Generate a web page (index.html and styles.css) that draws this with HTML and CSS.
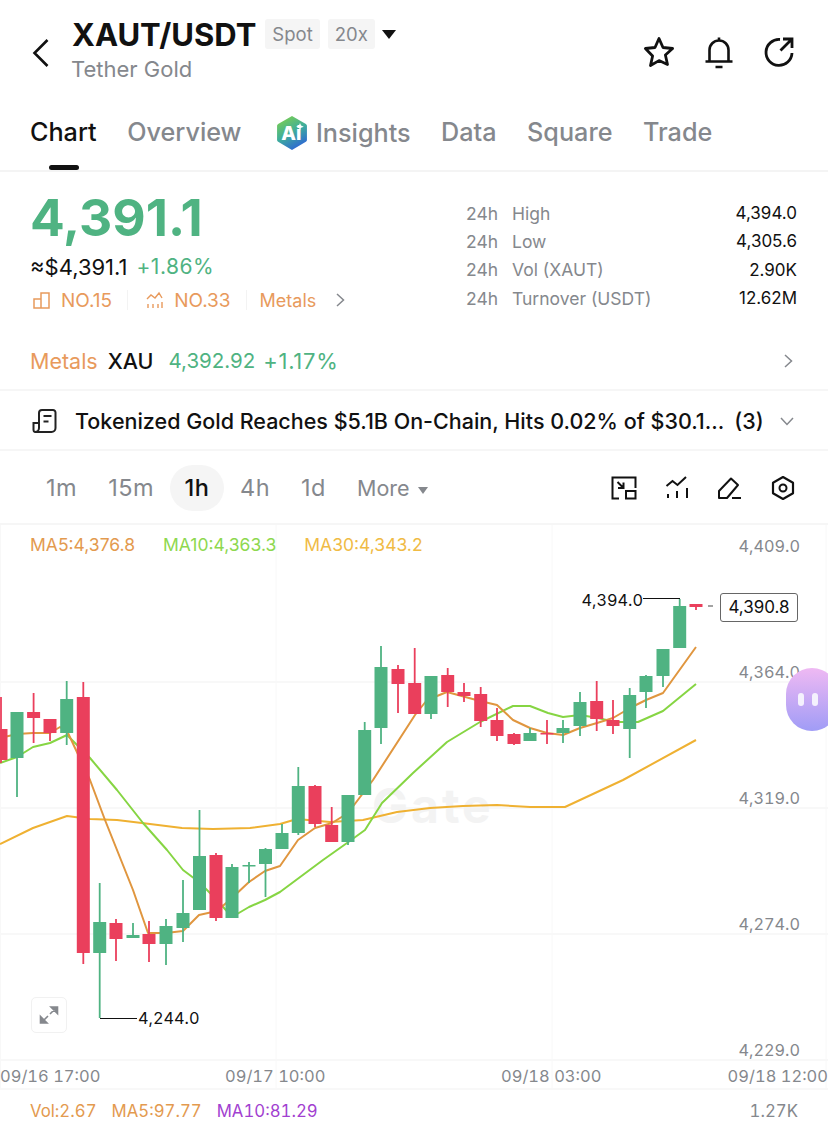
FILE: index.html
```html
<!doctype html>
<html lang="en">
    <head>
        <meta charset="UTF-8" />
        <meta name="viewport" content="width=device-width, initial-scale=1.0" />
        <title>XAUT/USDT</title>
        <link rel="stylesheet" href="styles.css">
    </head>
    <body>
        <header class="top-bar">
            <svg class="back" width="18" height="30" viewBox="0 0 18 30"><path d="M15.5 2 2.5 15l13 13" fill="none" stroke="#111" stroke-width="2.6"/></svg>
            <div class="pair">
                <div class="pair-line">
                    <h1>XAUT/USDT</h1>
                    <span class="badge">Spot</span>
                    <span class="badge badge-small">20x</span>
                    <span class="caret"></span>
                </div>
                <div class="pair-name">Tether Gold</div>
            </div>
            <div class="top-icons">
                <svg width="34" height="34" viewBox="0 0 34 34"><path d="M17 3.5l4 9 9.6 1-7.2 6.5 2.1 9.5L17 25.6 8.500 30.500l2.100-9.500L3.400 13.500l9.600-1z" fill="none" stroke="#111" stroke-width="2.800" stroke-linejoin="round"/></svg>
                <svg width="34" height="34" viewBox="0 0 34 34"><path d="M7.500 26V15a9.500 9.500 0 0 1 19 0v11M3.500 26.500h27M13.500 32h7M17 5V2.500" fill="none" stroke="#111" stroke-width="2.600"/></svg>
                <svg width="34" height="34" viewBox="0 0 34 34"><path d="M18 4.500A13 13 0 1 0 30 18M18.500 15.500 29 5M21 4h9v9" fill="none" stroke="#111" stroke-width="2.800"/></svg>
            </div>
        </header>

        <nav class="tabs">
            <a class="tab active">Chart</a>
            <a class="tab">Overview</a>
            <a class="tab tab-ai">
                <svg width="32" height="36" viewBox="1 1 30 34" preserveAspectRatio="none">
                    <defs><linearGradient id="aiGrad" x1="0.2" y1="0" x2="0.7" y2="1"><stop offset="0" stop-color="#7ccf4e"/><stop offset="0.5" stop-color="#3fae9c"/><stop offset="1" stop-color="#2c62d8"/></linearGradient></defs>
                    <path d="M16 2 29 9.500a2 2 0 0 1 1 2v13a2 2 0 0 1-1 1.800L16 34 3 26.300a2 2 0 0 1-1-1.800v-13a2 2 0 0 1 1-2z" fill="url(#aiGrad)"/>
                    <text x="6" y="25" class="ai-mark">Ai</text>
                    <path d="M23.500 8.500l1 2.500 2.500 1-2.500 1-1 2.500-1-2.500-2.500-1 2.500-1z" fill="white"/>
                </svg>
                Insights
            </a>
            <a class="tab">Data</a>
            <a class="tab">Square</a>
            <a class="tab">Trade</a>
        </nav>

        <section class="summary">
            <div class="summary-left">
                <div class="last-price">4,391.1</div>
                <div class="fiat-line"><span>≈$4,391.1</span><span class="green pct">+1.86%</span></div>
                <div class="rank-line">
                    <svg width="18" height="18" viewBox="0 0 18 18"><path d="M1 8h7v9H1zM8 2h8v15H8z" fill="none" stroke="#e89a5c" stroke-width="1.500"/></svg>
                    <span class="rank-text">NO.15</span>
                    <i class="rank-sep"></i>
                    <svg width="18" height="18" viewBox="0 0 18 18"><path d="M1 8l4-4 4 3 4-5 3 5M2 17v-4M7 17v-4M12 17v-4M16 17v-6" fill="none" stroke="#e89a5c" stroke-width="1.400"/></svg>
                    <span class="rank-text">NO.33</span>
                    <i class="rank-sep rank-sep-last"></i>
                    <span class="rank-tag">Metals</span>
                    <svg class="rank-more" width="11" height="16" viewBox="0 0 11 16"><path d="M2 2l6.500 6L2 14" fill="none" stroke="#85888d" stroke-width="1.500"/></svg>
                </div>
            </div>
            <dl class="stats">
                <div class="stat"><dt>24h</dt><dd>High</dd><b>4,394.0</b></div>
                <div class="stat"><dt>24h</dt><dd>Low</dd><b>4,305.6</b></div>
                <div class="stat"><dt>24h</dt><dd>Vol (XAUT)</dd><b>2.90K</b></div>
                <div class="stat"><dt>24h</dt><dd>Turnover (USDT)</dd><b>12.62M</b></div>
            </dl>
        </section>

        <div class="index-row">
            <span class="orange">Metals</span>
            <span class="index-name">XAU</span>
            <span class="green index-price">4,392.92</span>
            <span class="green pct-wide">+1.17%</span>
            <svg class="row-arrow" width="11" height="16" viewBox="0 0 11 16"><path d="M2 2l6.500 6L2 14" fill="none" stroke="#85888d" stroke-width="1.500"/></svg>
        </div>

        <div class="news-row">
            <svg width="26" height="26" viewBox="0 0 26 26"><path d="M7 20V5a3 3 0 0 1 3-3h11a2.500 2.500 0 0 1 2.500 2.500V20a4 4 0 0 1-4 4H4.500M7 20a4 4 0 0 1-4 4 2 2 0 0 1-1.500-2v-7H7M11.500 8h8M11.500 13.500h5" fill="none" stroke="#222" stroke-width="2"/></svg>
            <span class="news-text">Tokenized Gold Reaches $5.1B On-Chain, Hits 0.02% of $30.1...</span>
            <span class="news-count">(3)</span>
            <svg class="row-arrow" width="16" height="11" viewBox="0 0 16 11"><path d="M2 2l6 6.500L14 2" fill="none" stroke="#85888d" stroke-width="1.500"/></svg>
        </div>

        <div class="interval-row">
            <span class="interval">1m</span>
            <span class="interval">15m</span>
            <span class="interval selected">1h</span>
            <span class="interval">4h</span>
            <span class="interval">1d</span>
            <span class="interval more">More <i class="more-caret"></i></span>
            <div class="tools">
                <svg width="26" height="24" viewBox="0 0 26 24"><path d="M8 22.500H1.500v-21h23V12M6.500 6l6 6M12.500 6.500V12H7M15 15h9.500v7.500H15z" fill="none" stroke="#111" stroke-width="2"/></svg>
                <svg width="24" height="24" viewBox="0 0 24 24"><path d="M1.500 10l6-5 5 4 8.500-8M3 22v-4M12 22v-7M22 22V12" fill="none" stroke="#111" stroke-width="2"/></svg>
                <svg width="26" height="24" viewBox="0 0 26 24"><path d="M2 15 14 2.500l7 6.500L10 22H2zM15 22h9" fill="none" stroke="#111" stroke-width="2" stroke-linejoin="round"/></svg>
                <svg width="24" height="26" viewBox="0 0 24 26"><path d="M12 2l10 5.700v10.600L12 24 2 18.300V7.700z" fill="none" stroke="#111" stroke-width="2.200" stroke-linejoin="round"/><circle cx="12" cy="13" r="3.500" fill="none" stroke="#111" stroke-width="2"/></svg>
            </div>
        </div>

        <div class="chart">
            <svg id="chartSvg" width="828" height="565" viewBox="0 525 828 565"></svg>
            <div class="legend">
                <span class="ma5">MA5:4,376.8</span>
                <span class="ma10">MA10:4,363.3</span>
                <span class="ma30">MA30:4,343.2</span>
            </div>
            <div class="price-tag">4,390.8</div>
            <button class="expand">
                <svg width="20" height="20" viewBox="0 0 20 20"><path d="M11 9l6-6M12 2h6.500v6.500L12 2zM9 11l-6 6M8 18H1.500v-6.500L8 18z" fill="#85888d" stroke="#85888d" stroke-width="1.600"/></svg>
            </button>
            <div class="assistant"><i></i><i></i></div>
        </div>

        <div class="volume-row">
            <span class="vol-a">Vol:2.67</span>
            <span class="vol-a">MA5:97.77</span>
            <span class="vol-b">MA10:81.29</span>
            <span class="vol-max">1.27K</span>
        </div>

        <script src="chart.js"></script>
    </body>
</html>
```

FILE: styles.css
```css
* {
    box-sizing: border-box;
}
html,
body {
    margin: 0;
    width: 828px;
    height: 1130px;
    overflow: hidden;
}
body {
    font-family: Inter, "Liberation Sans", sans-serif;
    background-color: white;
    color: #111;
}
.green {
    color: #4fb382;
}
.orange {
    color: #e89a5c;
}

/* header */
.top-bar {
    height: 100px;
    display: flex;
    align-items: flex-start;
    padding: 0 32px 0 32px;
}
.back {
    margin-top: 38px;
    margin-right: 22px;
    flex-shrink: 0;
}
.pair {
    padding-top: 17px;
}
.pair-line {
    display: flex;
    align-items: center;
    height: 34px;
}
.pair-line h1 {
    margin: 0 9px 0 0;
    font-size: 31px;
    font-weight: 700;
}
.badge {
    background-color: #f5f5f5;
    color: #85888d;
    font-size: 18.500px;
    height: 30px;
    line-height: 30px;
    padding: 0 7px;
    border-radius: 3px;
    margin-right: 8px;
}
.caret {
    width: 0;
    height: 0;
    margin-left: -1px;
    border-left: 7px solid transparent;
    border-right: 7px solid transparent;
    border-top: 9px solid #111;
}
.pair-name {
    font-size: 22px;
    color: #85888d;
    margin-top: 5px;
    margin-left: -1px;
}
.top-icons {
    margin-left: auto;
    margin-top: 35px;
    display: flex;
    gap: 26px;
}

/* tabs */
.tabs {
    height: 72px;
    display: flex;
    gap: 30.500px;
    padding: 15px 0 0 30px;
    border-bottom: 2px solid #f4f4f4;
}
.tab {
    position: relative;
    font-size: 25.200px;
    font-weight: 500;
    color: #85888d;
    height: 36px;
    line-height: 34px;
}
.tab.active {
    color: #111;
}
.tab.active::after {
    content: "";
    position: absolute;
    left: 19px;
    bottom: -19px;
    width: 30px;
    height: 5px;
    border-radius: 3px;
    background-color: #111;
}
.tab-ai {
    display: flex;
    align-items: center;
    gap: 8px;
    margin-left: 4px;
}
.ai-mark {
    font-size: 18px;
    font-weight: 800;
    fill: white;
}

/* price summary */
.summary {
    height: 160px;
    display: flex;
    justify-content: space-between;
    padding: 12px 31px 0 30px;
}
.last-price {
    font-size: 51.500px;
    font-weight: 700;
    line-height: 66px;
    color: #4fb382;
}
.fiat-line {
    display: flex;
    gap: 9px;
    font-size: 22px;
    line-height: 26px;
    margin-top: 4px;
}
.pct {
    font-size: 21px;
    letter-spacing: 0.5px;
}
.rank-line {
    display: flex;
    align-items: center;
    height: 24px;
    margin-top: 8px;
    font-size: 19px;
    color: #e89a5c;
}
.rank-line svg {
    margin: 0 10px 0 3px;
}
.rank-sep {
    width: 1px;
    height: 20px;
    background-color: #f3f3f3;
    margin: 0 15px;
}
.rank-sep-last {
    margin-right: 13px;
}
.rank-tag {
    font-size: 18px;
}
.rank-line .rank-more {
    margin-left: 19px;
}
.stats {
    margin: 15px 0 0;
    width: 331px;
}
.stat {
    display: flex;
    height: 28.300px;
    font-size: 17.500px;
    color: #85888d;
    align-items: center;
}
.stat dt {
    width: 46px;
}
.stat dd {
    margin: 0;
}
.stat b {
    margin-left: auto;
    font-weight: 400;
    font-size: 17px;
    color: #111;
}

/* metals + news rows */
.index-row {
    height: 59px;
    display: flex;
    align-items: center;
    padding: 0 34px 0 30px;
    font-size: 21.500px;
    border-bottom: 2px solid #f6f6f6;
}
.index-name {
    margin-left: 10px;
    font-weight: 500;
}
.index-price {
    margin: 0 8px 0 15px;
    font-size: 20.500px;
}
.pct-wide {
    font-size: 22px;
    letter-spacing: 0.7px;
}
.row-arrow {
    margin-left: auto;
}
.news-row {
    height: 60px;
    display: flex;
    align-items: center;
    padding: 2px 33px 0 32px;
    font-size: 21.500px;
    font-weight: 500;
    border-bottom: 2px solid #f6f6f6;
}
.news-text {
    margin-left: 17px;
    white-space: nowrap;
}
.news-count {
    margin-left: 10px;
}

/* interval row */
.interval-row {
    height: 74px;
    display: flex;
    align-items: center;
    padding: 2px 33px 0 30px;
    font-size: 23.500px;
    letter-spacing: 0.5px;
    color: #85888d;
    border-bottom: 2px solid #f6f6f6;
}
.interval {
    height: 46px;
    line-height: 46px;
    padding: 0 15.500px;
    border-radius: 23px;
}
.interval:first-child {
    padding-left: 16px;
}
.interval.selected {
    background-color: #f5f5f5;
    color: #111;
    font-weight: 500;
    padding: 0 15px;
}
.interval.more {
    font-size: 21.500px;
    letter-spacing: 0;
}
.more-caret {
    display: inline-block;
    vertical-align: middle;
    margin-left: 2px;
    border-left: 5.500px solid transparent;
    border-right: 5.500px solid transparent;
    border-top: 7px solid #85888d;
}
.tools {
    margin-left: auto;
    display: flex;
    align-items: center;
    gap: 28px;
}

/* chart */
.chart {
    position: relative;
    height: 564px;
}
#chartSvg {
    display: block;
}
.chart-text {
    font-family: Inter, "Liberation Sans", sans-serif;
    font-size: 16.300px;
    font-feature-settings: "tnum";
}
.chart-date {
    font-size: 16.500px;
}
.legend {
    position: absolute;
    left: 30px;
    top: 9px;
    display: flex;
    gap: 28px;
    font-size: 17.500px;
}
.ma5 {
    color: #e39a4f;
}
.ma10 {
    color: #8ed84f;
}
.ma30 {
    color: #f0bb45;
}
.price-tag {
    position: absolute;
    left: 720px;
    top: 68px;
    width: 78px;
    height: 29px;
    line-height: 27px;
    text-align: center;
    font-size: 17px;
    background-color: white;
    border: 1px solid #666;
    border-radius: 3px;
}
.expand {
    position: absolute;
    left: 31px;
    top: 472px;
    width: 36px;
    height: 36px;
    padding: 7px;
    background-color: white;
    border: 1.500px solid #f1f1f1;
    border-radius: 5px;
}
.expand svg {
    display: block;
}
.assistant {
    position: absolute;
    right: -10px;
    top: 143px;
    width: 52px;
    height: 63px;
    border-radius: 32px;
    background: linear-gradient(#efb9f3, #a09cf6);
    display: flex;
    align-items: center;
    gap: 8px;
    padding-left: 12px;
}
.assistant i {
    width: 6px;
    height: 13px;
    border-radius: 3px;
    background-color: #f4f1fd;
}

/* volume row */
.volume-row {
    height: 41px;
    display: flex;
    align-items: center;
    gap: 15px;
    padding: 3px 30px 0 30px;
    font-size: 16.800px;
    font-feature-settings: "tnum";
}
.vol-a {
    color: #e39a4f;
}
.vol-b {
    color: #a23fd0;
}
.vol-max {
    margin-left: auto;
    color: #85888d;
}
```

FILE: chart.js
```js
const NS = "http://www.w3.org/2000/svg";
const svg = document.getElementById("chartSvg");

const GREEN = "#4fb382";
const RED = "#ea3f5c";

// x, wick top, body top, body bottom, wick bottom, colour
const candles = [
    [1, 697, 729, 760, 763, RED],
    [17, 712, 712, 758, 797, GREEN],
    [33.6, 693, 712, 718, 743, RED],
    [50, 719, 719, 733, 741, RED],
    [66.7, 681, 699, 733, 745, GREEN],
    [83.3, 682, 697, 953, 964, RED],
    [99.7, 883, 922, 953, 1018, GREEN],
    [116, 919, 923, 939, 961, RED],
    [133, 923, 935, 938, 938, GREEN],
    [149, 921, 934, 944, 962, RED],
    [166, 919, 926, 944, 965, GREEN],
    [183, 880, 913, 928, 942, GREEN],
    [199.5, 810, 856, 910, 910, GREEN],
    [216, 853, 855, 918, 921, RED],
    [232, 864, 867, 918, 918, GREEN],
    [249, 862, 865, 866, 883, GREEN],
    [265.5, 848, 849, 864, 897, GREEN],
    [282, 824, 833, 849, 849, GREEN],
    [298.3, 767, 786, 833, 835, GREEN],
    [315, 785, 786, 824, 827, RED],
    [331.7, 807, 825, 842, 842, RED],
    [348, 795, 795, 842, 845, GREEN],
    [364.7, 722, 730, 795, 795, GREEN],
    [381, 646, 667, 728, 744, GREEN],
    [398, 665, 669, 684, 713, RED],
    [414.7, 648, 683, 714, 714, RED],
    [431, 676, 676, 714, 719, GREEN],
    [447.7, 668, 675, 692, 707, RED],
    [464, 683, 692, 696, 702, RED],
    [480.7, 687, 694, 721, 727, RED],
    [497, 708, 720, 736, 741, RED],
    [514, 733, 734, 744, 745, RED],
    [530, 728, 733, 741, 741, GREEN],
    [547, 720, 733, 734, 744, RED],
    [563, 720, 728, 733, 743, GREEN],
    [580, 692, 702, 726, 736, GREEN],
    [596.7, 681, 701, 719, 731, RED],
    [613, 700, 720, 726, 734, RED],
    [629.7, 688, 695, 729, 758, GREEN],
    [646, 675, 676, 692, 708, GREEN],
    [663, 649, 649, 676, 687, GREEN],
    [679.7, 599, 606, 648, 648, GREEN],
    [696, 604, 604, 607, 610, RED],
];

const ma5 = [
    [0, 738], [17, 734], [33, 733], [50, 733], [60, 727], [68, 733], [90, 780],
    [105, 820], [133, 890], [148, 933], [166, 933], [183, 931], [199, 915],
    [217, 911], [233, 897], [249, 882], [265, 871], [280, 866], [298, 840],
    [315, 828], [332, 823], [348, 813], [373, 780], [415, 715], [427, 700],
    [447, 692], [480, 701], [497, 705], [513, 720], [530, 728], [547, 733],
    [563, 735], [580, 728], [597, 723], [613, 718], [630, 708], [646, 700],
    [663, 693], [696, 647],
];

const ma10 = [
    [0, 763], [17, 757], [33, 747], [50, 743], [67, 735], [90, 758], [117, 790],
    [143, 823], [167, 850], [183, 870], [199, 882], [217, 900], [232, 917],
    [249, 907], [265, 900], [280, 892], [323, 860], [347, 843], [365, 830],
    [382, 803], [413, 773], [447, 742], [480, 722], [513, 706], [530, 706],
    [548, 713], [563, 717], [580, 715], [598, 718], [615, 722], [638, 722],
    [663, 711], [696, 684],
];

const ma30 = [
    [0, 844], [33, 828], [67, 816], [90, 819], [117, 820], [150, 824], [182, 828],
    [213, 829], [250, 828], [280, 824], [297, 819], [330, 822], [363, 820],
    [397, 812], [430, 808], [463, 806], [497, 805], [530, 807], [565, 807],
    [623, 780], [696, 740],
];

function add(tag, attrs, text) {
    const el = document.createElementNS(NS, tag);
    for (const key in attrs) {
        el.setAttribute(key, attrs[key]);
    }
    if (text) {
        el.textContent = text;
    }
    svg.appendChild(el);
    return el;
}

function line(x1, y1, x2, y2, stroke, width) {
    add("line", { x1, y1, x2, y2, stroke, "stroke-width": width });
}

function label(x, y, text, fill, anchor, extraClass) {
    add("text", {
        x,
        y,
        fill,
        "text-anchor": anchor || "start",
        class: "chart-text " + (extraClass || ""),
    }, text);
}

function drawMa(points, stroke) {
    add("polyline", {
        points: points.map((p) => p.join(",")).join(" "),
        fill: "none",
        stroke,
        "stroke-width": 2,
        "stroke-linejoin": "round",
    });
}

// grid
[682, 808, 934, 1060, 1089].forEach((y) => line(0, y, 828, y, "#f6f6f6", 1.5));
[0.5, 276, 552, 826].forEach((x) => line(x, 525, x, 1090, "#f8f8f8", 1));

// watermark
add("text", {
    x: 372,
    y: 823,
    fill: "#f3f3f3",
    "font-size": 48,
    "font-weight": 700,
    "letter-spacing": 3,
    "font-family": "Inter, sans-serif",
}, "Gate");

drawMa(ma30, "#efb132");
drawMa(ma10, "#86d543");
drawMa(ma5, "#e0963f");

candles.forEach(([x, wickTop, top, bottom, wickBottom, color]) => {
    line(x, wickTop, x, wickBottom, color, 1.8);
    add("rect", { x: x - 6.5, y: top, width: 13, height: Math.max(bottom - top, 1.5), fill: color });
});

// axis labels
[
    ["4,409.0", 552],
    ["4,364.0", 678],
    ["4,319.0", 804],
    ["4,274.0", 930],
    ["4,229.0", 1056],
].forEach(([text, y]) => label(800, y, text, "#85888d", "end"));

label(0, 1082, "09/16 17:00", "#85888d", "start", "chart-date");
label(225, 1082, "09/17 10:00", "#85888d", "start", "chart-date");
label(501, 1082, "09/18 03:00", "#85888d", "start", "chart-date");
label(828, 1082, "09/18 12:00", "#85888d", "end", "chart-date");

// high / low markers
line(643, 598.5, 680, 598.5, "#111", 1);
label(643, 606, "4,394.0", "#111", "end");
line(100, 1018.5, 137, 1018.5, "#111", 1);
label(138, 1024, "4,244.0", "#111");
line(708, 606, 713, 606, "#666", 1.2);
```
